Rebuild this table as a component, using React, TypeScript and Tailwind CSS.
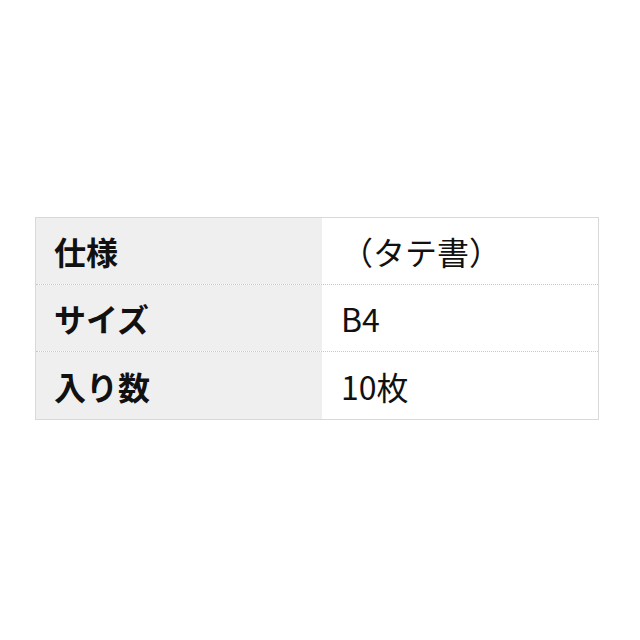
import React from 'react';

const rows = [
  { label: '仕様', value: '（タテ書）' },
  { label: 'サイズ', value: 'B4' },
  { label: '入り数', value: '10枚' },
];

export default function App() {
  return (
    <div className="w-[640px] h-[640px] bg-white pt-[217px] pl-[35px]">
      <div
        className="w-[564px] border border-[#d9d9d9] text-[#111]"
        style={{ fontFamily: '"Noto Sans CJK JP", "Noto Sans", sans-serif' }}
      >
        {rows.map((r, i) => (
          <div
            key={r.label}
            className={`flex h-[67px] ${i < rows.length - 1 ? 'border-b border-dotted border-[#c8c8c8]' : ''}`}
          >
            <div className="w-[286px] bg-[#efefef] flex items-center pl-[18px] text-[32px] leading-none font-bold">
              {r.label}
            </div>
            <div className="flex-1 flex items-center pl-[19px] text-[32px] leading-none">
              {r.value}
            </div>
          </div>
        ))}
      </div>
    </div>
  );
}
